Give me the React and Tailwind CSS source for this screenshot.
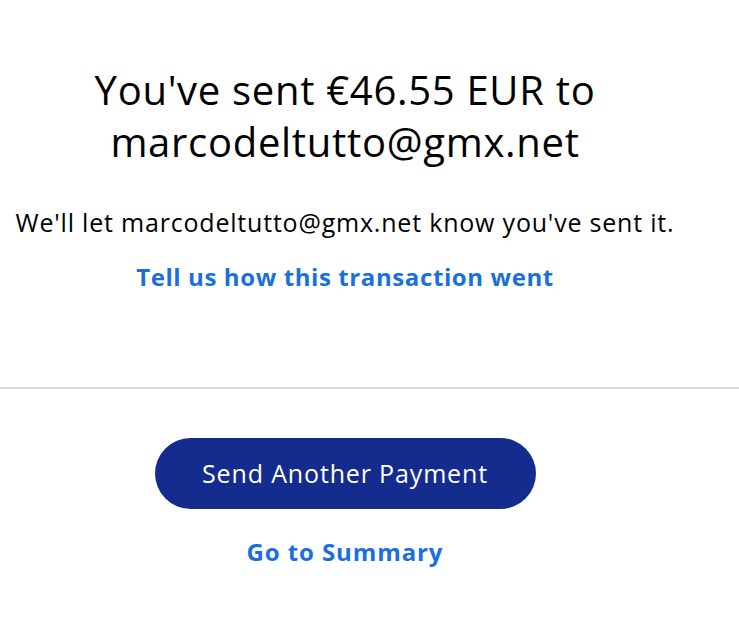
export default function App() {
  return (
    <div className="min-h-screen bg-white" style={{ fontFamily: '"Open Sans", "Noto Sans", sans-serif' }}>
      <div className="w-[690px] flex flex-col items-center pt-[64px]">
        <h1 className="text-[40px] leading-[52px] tracking-[0.7px] text-[#000] text-center font-normal">
          You've sent €46.55 EUR to<br />marcodeltutto@gmx.net
        </h1>
        <p className="mt-[38px] text-[25px] leading-[32px] tracking-[0.8px] text-[#000]">We'll let marcodeltutto@gmx.net know you've sent it.</p>
        <a className="mt-[23px] text-[24px] leading-[32px] tracking-[0.6px] font-bold text-[#1a6fe0]">Tell us how this transaction went</a>
      </div>
      <div className="mt-[94px] h-[2px] bg-[#dcdcdc] w-full"></div>
      <div className="w-[690px] flex flex-col items-center pt-[49px]">
        <button className="w-[381px] h-[71px] rounded-full bg-[#142c8e] text-white text-[25px] tracking-[0.85px] font-medium">Send Another Payment</button>
        <a className="mt-[27px] text-[24px] leading-[32px] tracking-[0.9px] font-bold text-[#1a6fe0]">Go to Summary</a>
      </div>
    </div>
  );
}
